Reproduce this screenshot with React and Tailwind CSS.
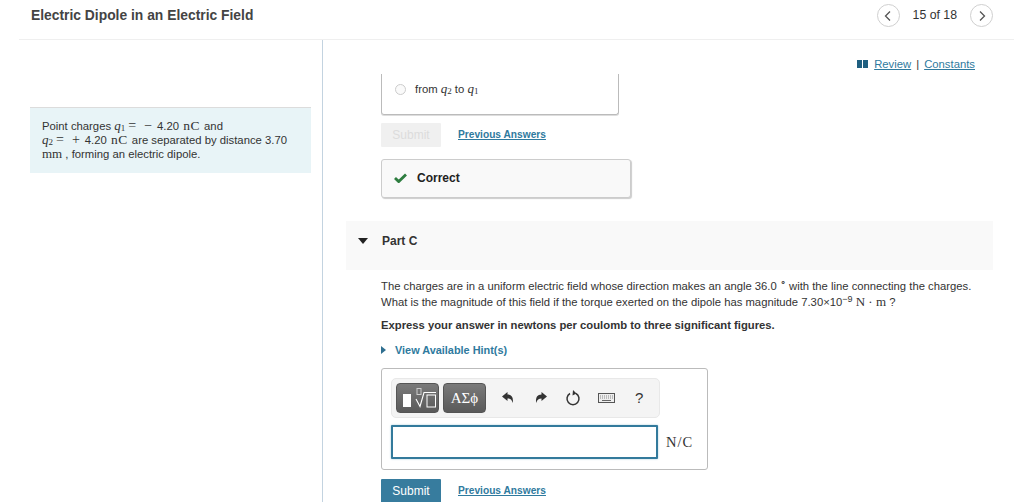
import React from "react";

const M = ({ children }) => <span className="font-['Liberation_Serif',serif] text-[13px] leading-none">{children}</span>;
const Q = ({ n }) => (
  <span className="font-['Liberation_Serif',serif] text-[13px] leading-none">
    <i>q</i>
    <sub className="text-[9px] leading-none align-[-1px] bottom-0">{n}</sub>
  </span>
);
const Op = ({ s }) => (
  <span className="font-['Liberation_Serif',serif] text-[14px] ml-[3px] mr-[2px] tracking-[3px] leading-none">{s}</span>
);
const NC = () => <span className="font-['Liberation_Serif',serif] text-[13.5px] tracking-[0.5px] leading-none ml-[1px] mr-[1px]">nC</span>;

const Prev = () => (
  <a className="text-[10.2px] font-bold text-[#2f7a9e] underline underline-offset-1">Previous Answers</a>
);

const Undo = ({ flip }) => (
  <svg width="14" height="14" viewBox="0 0 14 14" className={flip ? "-scale-x-100" : ""}>
    <path d="M1 5.5 L6.5 1 V3.6 C10.5 3.6 12.6 6.4 11.8 12 C10.8 8.8 9.2 7.6 6.5 7.6 V10 Z" fill="#333" />
  </svg>
);

export default function App() {
  return (
    <div className="h-[502px] w-[1024px] overflow-hidden bg-white font-['Liberation_Sans',sans-serif] text-[#333] flex flex-col">
      <header className="h-[40px] mx-[19px] w-[995px] border-b border-[#efefef] flex items-center justify-between pl-[12px] pr-[21px] shrink-0">
        <h1 className="text-[13.85px] font-bold text-[#444] relative top-[-4px] leading-none">Electric Dipole in an Electric Field</h1>
        <div className="flex items-center relative top-[-4px] text-[12.3px] text-[#333]">
          <span className="w-[23px] h-[23px] rounded-full border border-[#d0d0d0] flex items-center justify-center">
            <svg width="10" height="12" viewBox="0 0 10 12"><path d="M7 1.5 L2.5 6 L7 10.5" fill="none" stroke="#555" strokeWidth="1.3" /></svg>
          </span>
          <span className="ml-[13px] mr-[13px]">15 of 18</span>
          <span className="w-[23px] h-[23px] rounded-full border border-[#d0d0d0] flex items-center justify-center">
            <svg width="10" height="12" viewBox="0 0 10 12"><path d="M3 1.5 L7.5 6 L3 10.5" fill="none" stroke="#555" strokeWidth="1.3" /></svg>
          </span>
        </div>
      </header>

      <div className="flex flex-1 min-h-0">
        <aside className="w-[304px] ml-[19px] border-r border-[#c3d3e0] pl-[11px] pr-[11px] pt-[67px] shrink-0">
          <div className="w-[281px] h-[66px] bg-[#e8f4f7] border-t border-[#dcdcdc] pl-[12px] pt-[11px] text-[11.3px] leading-[14px] text-[#333] whitespace-nowrap">
            <p className="h-[14px]">Point charges <Q n="1" /><Op s="=" /><Op s="−" />4.20 <NC /> and</p>
            <p className="h-[14px]"><Q n="2" /><Op s="=" /><Op s="+" />4.20 <NC /> are separated by distance 3.70</p>
            <p className="h-[14px]"><M>mm</M> , forming an electric dipole.</p>
          </div>
        </aside>

        <main className="flex-1 pl-[23px] pr-[21px] min-w-0">
          <div className="h-[34px] flex items-start justify-end pt-[17px] pr-[28px] text-[11.3px] leading-[14px] text-[#2f7a9e]">
            <svg width="11" height="8" viewBox="0 0 11 8" className="mt-[3px] mr-[6px]"><path d="M0 0 H5 V8 H0 Z M6 0 H11 V8 H6 Z" fill="#1f5f80" /></svg>
            <a className="underline">Review</a>
            <span className="mx-[5px] text-[#333]">|</span>
            <a className="underline">Constants</a>
          </div>

          <div className="ml-[35px] w-[238px] h-[41px] border-x border-b border-[#bbb] rounded-b-[3px] shadow-[0_1px_0_#ddd] flex items-center pl-[13px] pb-[9px] text-[11.3px]">
            <span className="w-[11px] h-[11px] rounded-full border border-[#ccc] bg-[#fafafa] mr-[9px]"></span>
            <span>from <Q n="2" /> to <Q n="1" /></span>
          </div>

          <div className="ml-[35px] mt-[8px] flex items-center">
            <button className="w-[60px] h-[24px] bg-[#f0f0f0] text-[#dcdcdc] text-[12px] rounded-[1px] mr-[17px]">Submit</button>
            <Prev />
          </div>

          <div className="ml-[35px] mt-[12px] w-[250px] h-[39px] bg-[#f9f9f9] border border-[#ccc] rounded-[3px] shadow-[1px_1px_1px_#ccc] flex items-center pl-[12px] pb-[2px]">
            <svg width="13" height="10" viewBox="0 0 13 10" className="mr-[10px]"><path d="M1 5 L4.7 8.6 L12 1.4" fill="none" stroke="#2e7d40" strokeWidth="2.8" /></svg>
            <span className="text-[12px] font-bold text-[#222]">Correct</span>
          </div>

          <section className="mt-[23px] h-[49px] bg-[#f9f9f9] flex items-center pl-[12px] pb-[10px] w-[647px]">
            <svg width="10" height="6" viewBox="0 0 10 6" className="mr-[14px]"><path d="M0 0 H10 L5 6 Z" fill="#222" /></svg>
            <span className="text-[12px] font-bold text-[#333]">Part C</span>
          </section>

          <div className="ml-[35px] mt-[8px] text-[11.27px] leading-[16px] text-[#333] whitespace-nowrap">
            <p>The charges are in a uniform electric field whose direction makes an angle 36.0 <sup className="text-[10px] leading-none">∘</sup> with the line connecting the charges.</p>
            <p>What is the magnitude of this field if the torque exerted on the dipole has magnitude 7.30×10<sup className="text-[9px] leading-none">−9</sup> <M>N · m</M> ?</p>
            <p className="mt-[7px] font-bold">Express your answer in newtons per coulomb to three significant figures.</p>
            <div className="mt-[9px] flex items-center font-bold text-[#2f7a9e] h-[16px]">
              <svg width="5" height="8" viewBox="0 0 5 8" className="mr-[9px]"><path d="M0 0 L5 4 L0 8 Z" fill="#2f6f90" /></svg>
              <span className="text-[10.9px]">View Available Hint(s)</span>
            </div>
          </div>

          <div className="ml-[35px] mt-[10px] w-[327px] h-[102px] border border-[#bbb] rounded-[3px] pl-[9px] pt-[9px]">
            <div className="w-[269px] h-[40px] bg-[#f4f4f4] border border-[#e8e8e8] rounded-[5px] flex items-center pl-[4px]">
              <span className="w-[43px] h-[30px] rounded-[4px] bg-gradient-to-b from-[#7a7a7a] to-[#5a5a5a] border border-[#555] flex items-center justify-center">
                <svg width="41" height="28" viewBox="0 0 41 28">
                  <rect x="6" y="10" width="8" height="13" fill="#fff" />
                  <rect x="20" y="4.5" width="4" height="6" fill="none" stroke="#ccc" strokeWidth="1" />
                  <path d="M19 15 L23 22.5 L27 8.5 H39" fill="none" stroke="#fff" strokeWidth="1.1" />
                  <rect x="30" y="11" width="8.5" height="12" fill="none" stroke="#fff" strokeWidth="1" />
                </svg>
              </span>
              <span className="ml-[4px] w-[43px] h-[30px] rounded-[4px] bg-gradient-to-b from-[#7a7a7a] to-[#5a5a5a] border border-[#555] text-white text-[15px] font-['Liberation_Serif',serif] flex items-center justify-center">ΑΣϕ</span>
              <span className="ml-[15px]"><Undo /></span>
              <span className="ml-[19px]"><Undo flip /></span>
              <svg width="16" height="16" viewBox="0 0 16 16" className="ml-[17px]">
                <path d="M11 3.5 A6 6 0 1 1 5 3.5" fill="none" stroke="#333" strokeWidth="1.5" />
                <path d="M8 0 L11.5 3.5 L7.5 5.5 Z" fill="#333" />
              </svg>
              <svg width="17" height="10" viewBox="0 0 17 10" className="ml-[17px]">
                <rect x="0.5" y="0.5" width="16" height="9" fill="#eee" stroke="#555" />
                <path d="M2 3 H15 M2 5 H15" stroke="#888" strokeWidth="1" strokeDasharray="1 1" />
                <path d="M4 7.5 H13" stroke="#666" strokeWidth="1" />
              </svg>
              <span className="ml-[20px] text-[15px] text-[#333] font-['Liberation_Sans',sans-serif]">?</span>
            </div>
            <div className="flex items-center mt-[7px]">
              <div className="w-[267px] h-[34px] border-2 border-[#337a9c] rounded-[1px] bg-white shadow-[0_0_2px_#9cc4d6]"></div>
              <span className="ml-[8px] pt-[2px] text-[14.5px] font-['Liberation_Serif',serif] text-[#333] tracking-[1px]">N/C</span>
            </div>
          </div>

          <div className="ml-[35px] mt-[9px] flex items-center">
            <button className="w-[60px] h-[24px] bg-[#377c9e] text-white text-[12px] rounded-[1px] mr-[17px]">Submit</button>
            <Prev />
          </div>
        </main>
      </div>
    </div>
  );
}
